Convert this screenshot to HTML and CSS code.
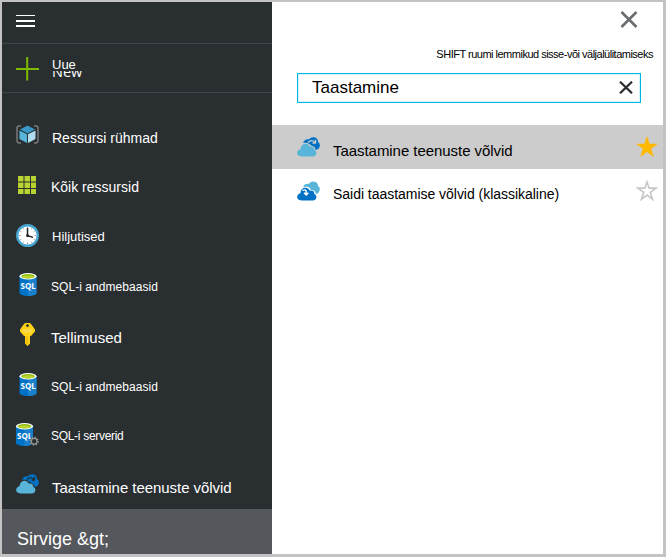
FILE: index.html
```html
<!DOCTYPE html>
<html lang="et">
<head>
<meta charset="utf-8">
<title>Taastamine</title>
<link rel="stylesheet" href="styles.css">
</head>
<body>
<svg class="defs" aria-hidden="true">
  <symbol id="sql" viewBox="0 0 18 23">
    <path d="M.5 3v17c0 1.600 3.800 3 8.500 3s8.500-1.400 8.500-3V3z" fill="#0072c6"/>
    <path d="M9 3h8.500v17c0 1.600-3.800 3-8.500 3z" fill="#1a80cc"/>
    <ellipse cx="9" cy="3.300" rx="8.500" ry="3.200" fill="#fff"/>
    <ellipse cx="9" cy="3.300" rx="6.900" ry="2.200" fill="#8fba00"/>
    <ellipse cx="9" cy="3.700" rx="5.500" ry="1.500" fill="#b8d432"/>
    <text x="9.200" y="16.300" class="sql-text">SQL</text>
  </symbol>
  <symbol id="vault" viewBox="0 0 23 20">
    <path d="M6 5.500Q8 1.500 12 2.300Q14-.2 17 .3Q21 1 21 5Q23.500 6.500 22.700 9.500Q22 12.500 18.500 13L14 8Z" fill="#0072c6"/>
    <path d="M11 5.500Q14.500 2 18 5.200M18.500 2.800V6H15.500" class="cloud-arrow"/>
    <path class="cloud-gap" d="M5 20C-1 20-1 13 3 11.800C3.500 5 11 4 13.800 9C17.500 8.500 18.500 11 18.200 12.500C21.500 16 19 20 16 20Z"/>
    <path d="M4.500 19.500C-1.200 19.500-1.200 13.500 3.500 12.300C4 6 10.500 5 13 9.700Q17.200 9 17.300 13C20.800 14.500 19.800 19.500 15.500 19.500Z" fill="#59b4d9"/>
  </symbol>
  <symbol id="classic-vault" viewBox="0 0 23 20">
    <path d="M6 5.500Q8 2 11.500 3Q14-.5 18 .8Q21 2 21 5Q23.500 6 22.500 9.500Q21.500 13 18.500 13Z" fill="#59b4d9"/>
    <path d="M4 20C-1 19-1 13 3 11.800C4 5 12 4 14 9Q18.500 8.500 18.500 12.500C22 15 20 20 16 20Z" fill="#fff"/>
    <path d="M4.500 19.500C-1.200 19.500-1.200 13.500 3.500 12.300C3.500 6 10.500 5 13 9.700Q17.200 9 17.300 13C20.800 14.500 19.800 19.500 15.500 19.500Z" fill="#0072c6"/>
    <path d="M5.500 9.500Q8.500 8 9.200 10V13.500M7 11.700L9.200 14L11.400 11.700" fill="none" stroke="#fff" stroke-width="1.400"/>
  </symbol>
</svg>
<div class="portal">
  <nav class="sidebar">
    <div class="menu">
      <svg width="19" height="13" viewBox="0 0 19 13" shape-rendering="crispEdges"><path d="M0 0h19v1H0zM0 5h19v2H0zM0 10h19v2H0z" fill="#fff"/></svg>
    </div>
    <div class="create">
      <svg class="plus" width="23" height="24" viewBox="0 0 23 24"><path d="M0 12h23M11.200 0v23.500" stroke="#7fba00" stroke-width="2"/></svg>
      <div class="create-label"><span class="uue">Uue</span><span class="behind">New</span></div>
    </div>
    <ul class="items">
      <li class="item"><span class="icon"><svg width="23" height="20" viewBox="0 0 23 20"><path d="M5 1H3Q1 1 1 3v13q0 1.500 2 2h2M18 1h2q2 0 2 2v13q0 1.500-2 2h-2" fill="none" stroke="#7a7a7a" stroke-width="1.500"/><path d="M4 4.500L11.500.5L19 4.500L11.500 8.500z" fill="#3999c6"/><path d="M3.500 5.500L11 9.300V18L3.500 14z" fill="#59b4d9"/><path d="M19.500 5.500L12 9.300V18L19.500 14z" fill="#b0def0"/></svg></span><span class="label groups">Ressursi rühmad</span></li>
      <li class="item"><span class="icon grid"><svg width="18" height="18" viewBox="0 0 18 18"><path d="M0 0h5.500v5.500H0zM6.500 0H12v5.500H6.500zM13 0h5v5.500h-5zM0 6.500h5.500V12H0zM6.500 6.500H12V12H6.500zM13 6.500h5V12h-5zM0 13h5.500v5H0zM6.500 13H12v5H6.500zM13 13h5v5h-5z" fill="#b8d432"/></svg></span><span class="label all">Kõik ressursid</span></li>
      <li class="item"><span class="icon"><svg width="23" height="23" viewBox="0 0 23 23"><circle cx="11.500" cy="11.500" r="10.300" fill="#fff" stroke="#45a5ce" stroke-width="2.400"/><path d="M11.500 3v1.500M11.500 18.500V20M3 11.500h1.500M18.500 11.500H20M7.300 4.300l.6 1M15.700 4.300l-.6 1M4.300 7.300l1 .6M18.700 7.300l-1 .6M7.300 18.700l.6-1M15.700 18.700l-.6-1M4.300 15.700l1-.6M18.700 15.700l-1-.6" stroke="#999"/><path d="M11.500 4v7.700l5.500 1.700" fill="none" stroke="#222" stroke-width="1.500"/><circle cx="11.500" cy="11.700" r="1.400" fill="#222"/></svg></span><span class="label recent">Hiljutised</span></li>
      <li class="item"><span class="icon raised"><svg width="18" height="23"><use href="#sql"/></svg></span><span class="label sql">SQL-i andmebaasid</span></li>
      <li class="item"><span class="icon raised"><svg width="15" height="23" viewBox="0 0 15 23"><path fill-rule="evenodd" d="M5 0h5l2 2.200l3 4.300v2l-4 4.500H10v7.500L7.500 23L5 20.500V13H4L0 8.500v-2L3 2.200zM7.500 1.200a1.400 1.400 0 1 0 0 2.800a1.400 1.400 0 1 0 0-2.800z" fill="#fcd116"/><path d="M2.500 7h10M3.500 9h8" stroke="#f9e27a"/><path d="M7 13.500V21" stroke="#dfa500"/></svg></span><span class="label subs">Tellimused</span></li>
      <li class="item"><span class="icon raised"><svg width="18" height="23"><use href="#sql"/></svg></span><span class="label sql">SQL-i andmebaasid</span></li>
      <li class="item"><span class="icon raised"><svg width="23" height="23" viewBox="0 0 23 23"><use href="#sql" width="18" height="23" x="-.5"/><circle cx="18.200" cy="18.200" r="4.200" fill="#292e31"/><circle cx="18.200" cy="18.200" r="2.900" fill="#292e31" stroke="#999" stroke-width="1.300"/><circle cx="18.200" cy="18.200" r="4" fill="none" stroke="#999" stroke-width="1.300" stroke-dasharray="1.300 1.842"/></svg></span><span class="label servers">SQL-i serverid</span></li>
      <li class="item"><span class="icon raised"><svg class="on-dark" width="23" height="20"><use href="#vault"/></svg></span><span class="label vaults">Taastamine teenuste võlvid</span></li>
    </ul>
    <div class="browse">Sirvige &amp;gt;</div>
  </nav>
  <main class="panel">
    <div class="close"><svg width="18" height="17" viewBox="0 0 18 17"><path d="M1.500 1L16.500 16M16.500 1L1.500 16" stroke="#696c70" stroke-width="2.500"/></svg></div>
    <div class="hint">SHIFT ruumi lemmikud sisse-või väljalülitamiseks</div>
    <div class="search"><span class="query">Taastamine</span><svg width="14" height="13" viewBox="0 0 14 13"><path d="M1 .7L13 12.300M13 .7L1 12.300" stroke="#292e31" stroke-width="2.200"/></svg></div>
    <div class="result selected">
      <svg class="on-grey" width="23" height="20"><use href="#vault"/></svg>
      <span class="name first">Taastamine teenuste võlvid</span>
      <svg width="22" height="21" viewBox="0 0 22 21"><path d="M11 0l2.600 7.800H22l-6.800 5L17.700 21L11 16L4.300 21l2.500-8.200L0 7.800h8.400z" fill="#ffb900"/></svg>
    </div>
    <div class="result">
      <svg width="23" height="20"><use href="#classic-vault"/></svg>
      <span class="name second">Saidi taastamise võlvid (klassikaline)</span>
      <svg width="22" height="21" viewBox="0 0 22 21"><path d="M11 2l2.100 6.200H20l-5.700 4.100l2.200 6.900L11 15.100l-5.500 4.100l2.200-6.900L2 8.200h6.900z" fill="none" stroke="#c8c8c8" stroke-width="1.700"/></svg>
    </div>
  </main>
</div>
</body>
</html>
```

FILE: styles.css
```css
* { box-sizing: border-box; }
body {
  margin: 0;
  font-family: "Liberation Sans", Arial, sans-serif;
  color: #000;
}
svg { display: block; flex: none; }
.defs { position: absolute; width: 0; height: 0; }
.sql-text {
  font: bold 8px "Open Sans", sans-serif;
  fill: #fff;
  text-anchor: middle;
}
.portal {
  display: flex;
  width: 666px;
  height: 557px;
  border: solid #c3c3c3;
  border-width: 2px 3px 3px 2px;
  background: #fff;
}
.sidebar {
  display: flex;
  flex-direction: column;
  width: 270px;
  background: #292e31;
  color: #fff;
}
.menu {
  height: 42px;
  padding: 13px 14px;
  border-bottom: 1px solid #40454a;
}
.create {
  display: flex;
  gap: 13px;
  height: 49px;
  padding: 13px 14px 0;
  border-bottom: 1px solid #40454a;
}
.create-label { display: flex; flex-direction: column; }
.uue { font-size: 13px; line-height: 16px; height: 14px; }
.behind {
  display: flex;
  align-items: flex-end;
  height: 6px;
  overflow: hidden;
  font: 14.500px/11px "Open Sans", sans-serif;
}
.items { margin: 0; padding: 17px 0 0; list-style: none; height: 416px; }
.item { display: flex; align-items: flex-start; height: 50px; padding-left: 14px; }
.icon { display: flex; align-items: center; justify-content: center; width: 23px; height: 50px; }
.raised { height: 48px; }
.grid { height: 49px; padding-right: 1px; }
.label { margin-left: 12px; line-height: 20px; white-space: nowrap; }
.groups { font-size: 14px; margin: 18px 0 0 13px; }
.all { font-size: 14px; margin-top: 17px; }
.recent { font-size: 13px; margin: 17px 0 0 13px; }
.sql { font-size: 12px; margin-top: 17px; letter-spacing: .05px; }
.subs { font-size: 15px; margin-top: 18px; }
.servers { font-size: 12px; margin-top: 16px; letter-spacing: -.3px; }
.vaults { font-size: 15px; margin: 18px 0 0 13px; letter-spacing: -.05px; }
.browse {
  flex: 1;
  padding: 19px 0 0 15px;
  background: #54575b;
  font-size: 18px;
  line-height: 22px;
}
.on-dark { --gap: #292e31; }
.on-grey { --gap: #ccc; }
.cloud-arrow { fill: none; stroke-width: 1.300; stroke: var(--gap); }
.cloud-gap { fill: var(--gap); }
.panel { flex: 1; display: flex; flex-direction: column; }
.close { display: flex; justify-content: flex-end; padding: 9px 25px 0 0; }
.hint {
  height: 20px;
  margin-top: 19px;
  padding-right: 10px;
  font-size: 11px;
  line-height: 14px;
  letter-spacing: -.5px;
  text-align: right;
  white-space: nowrap;
}
.search {
  display: flex;
  justify-content: space-between;
  align-items: center;
  height: 30px;
  margin: 6px 22px 22px 25px;
  padding: 0 7px 0 14px;
  border: 1px solid #00b4e4;
  box-shadow: inset 0 0 0 1px #d5f3fb;
}
.search svg { margin-top: -2px; }
.query { font-size: 17px; line-height: 20px; }
.result {
  display: flex;
  align-items: center;
  height: 44px;
  padding: 0 5px 0 25px;
}
.result svg { margin-top: -1px; }
.selected { background: #ccc; }
.name { flex: 1; margin-left: 13px; line-height: 20px; white-space: nowrap; }
.first { font-size: 15px; padding-top: 7px; letter-spacing: -.05px; }
.second { font-size: 14px; padding-top: 5px; letter-spacing: -.03px; }
```
